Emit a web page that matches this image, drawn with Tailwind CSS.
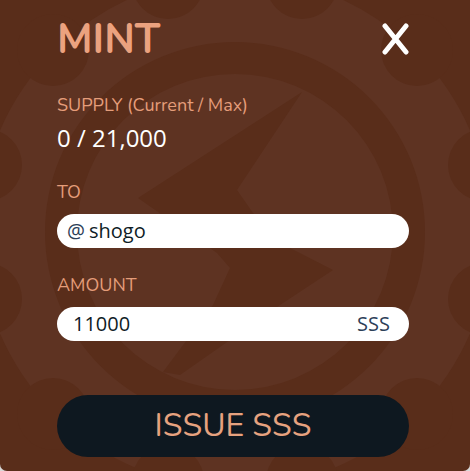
<!DOCTYPE html>
<html lang="en">
<head>
    <meta charset="UTF-8">
    <title>Mint</title>
    <script src="https://cdn.jsdelivr.net/npm/@tailwindcss/browser@4"></script>
</head>
<body class="bg-[#d8d8d8]">
    <div class="relative w-[470px] h-[471px] overflow-hidden rounded-b-[7px] bg-[#592d1a] font-['Nunito','Noto_Sans',sans-serif]">
        <!-- gear watermark -->
        <svg class="absolute inset-0" width="470" height="471" viewBox="0 0 470 471" fill="#5e3322">
            <circle cx="235" cy="232" r="256"/>
            <g fill="#592d1a">
                <circle cx="484" cy="165" r="36"/>
                <circle cx="484" cy="299" r="36"/>
                <circle cx="-14" cy="165" r="36"/>
                <circle cx="-14" cy="299" r="36"/>
                <circle cx="417" cy="50" r="36"/>
                <circle cx="417" cy="414" r="36"/>
                <circle cx="53" cy="50" r="36"/>
                <circle cx="53" cy="414" r="36"/>
                <circle cx="302" cy="-17" r="36"/>
                <circle cx="168" cy="-17" r="36"/>
                <circle cx="302" cy="481" r="36"/>
                <circle cx="168" cy="481" r="36"/>
                <circle cx="235" cy="232" r="190"/>
            </g>
            <circle cx="235" cy="232" r="158"/>
            <path fill="#592d1a" d="M302 92 L138 198 L217 253 L230 268 L213 305 L163 372 L180 375 L280 305 L333 270 L290 248 L253 213 L237 190 Z"/>
        </svg>

        <div class="relative pl-[57px] pr-[61px] pt-[17px]">
            <div class="flex items-center justify-between h-[44px]">
                <h1 class="text-[41px] font-bold leading-none text-[#eba27f]">MINT</h1>
                <svg width="27" height="32" viewBox="0 0 27 32" fill="none" stroke="#fff" stroke-width="5" stroke-linecap="round">
                    <path d="M3 3 L24 29 M24 3 L3 29"/>
                </svg>
            </div>

            <p class="mt-[32px] text-[18px] leading-[24px] text-[#e59d7a]">SUPPLY (Current / Max)</p>
            <p class="mt-[6px] text-[24px] leading-[30px] text-white font-['Open_Sans',sans-serif]">0 / 21,000</p>

            <p class="mt-[27px] text-[18px] leading-[24px] text-[#e59d7a]">TO</p>
            <div class="mt-[10px] h-[34px] rounded-full bg-white flex items-center pl-[10px] text-[#0f1c26] font-['Open_Sans',sans-serif]">
                <span class="text-[20px] text-[#2c4058] mr-[4px]">@</span>
                <span class="text-[20px]">shogo</span>
            </div>

            <p class="mt-[25px] text-[18px] leading-[24px] text-[#e59d7a]">AMOUNT</p>
            <div class="mt-[10px] h-[34px] rounded-full bg-white flex items-center justify-between pl-[16px] pr-[19px] font-['Open_Sans',sans-serif]">
                <span class="text-[20px] text-[#0f1c26]">11000</span>
                <span class="text-[20px] text-[#2c4058]">SSS</span>
            </div>

            <button class="mt-[54px] w-full h-[62px] rounded-[31px] bg-[#0e1820] text-[#e6a27f] text-[32px] font-['Nunito',sans-serif]">ISSUE SSS</button>
        </div>
    </div>
</body>
</html>
